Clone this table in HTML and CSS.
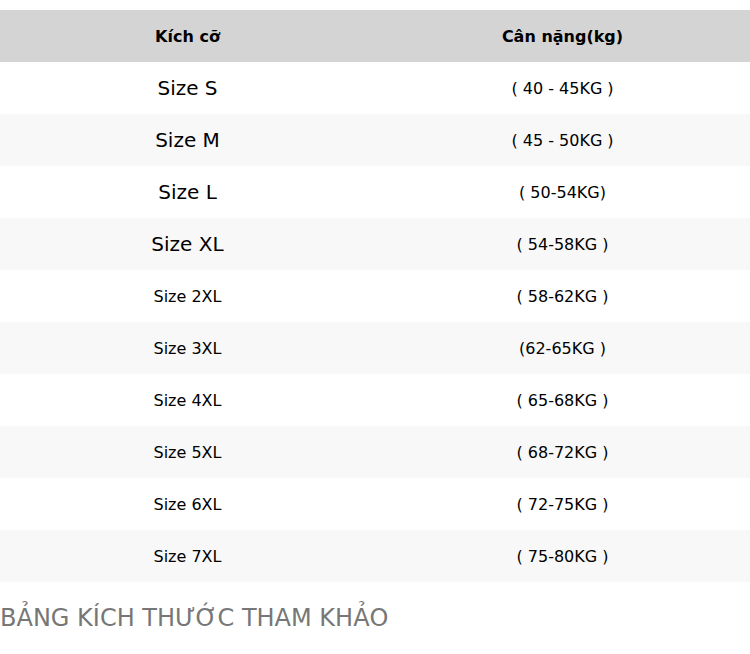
FILE: index.html
```html
<!DOCTYPE html>
<html lang="vi">
<head>
<meta charset="utf-8">
<title>Bảng kích thước</title>
<link rel="stylesheet" href="styles.css">
</head>
<body>
<table class="size-table">
  <caption class="caption">BẢNG KÍCH THƯỚC THAM KHẢO</caption>
  <thead>
    <tr><th>Kích cỡ</th><th>Cân nặng(kg)</th></tr>
  </thead>
  <tbody>
    <tr><td class="big">Size S</td><td>( 40 - 45KG )</td></tr>
    <tr><td class="big">Size M</td><td>( 45 - 50KG )</td></tr>
    <tr><td class="big">Size L</td><td>( 50-54KG)</td></tr>
    <tr><td class="big">Size XL</td><td>( 54-58KG )</td></tr>
    <tr><td>Size 2XL</td><td>( 58-62KG )</td></tr>
    <tr><td>Size 3XL</td><td>(62-65KG )</td></tr>
    <tr><td>Size 4XL</td><td>( 65-68KG )</td></tr>
    <tr><td>Size 5XL</td><td>( 68-72KG )</td></tr>
    <tr><td>Size 6XL</td><td>( 72-75KG )</td></tr>
    <tr><td>Size 7XL</td><td>( 75-80KG )</td></tr>
  </tbody>
</table>
</body>
</html>
```

FILE: styles.css
```css
html, body {
  margin: 0;
  padding: 0;
  background: #ffffff;
}
body {
  font-family: "DejaVu Sans", sans-serif;
  color: #000;
  padding-top: 10px;
}
.size-table {
  width: 750px;
  border-collapse: collapse;
  border-spacing: 0;
  table-layout: fixed;
}
.size-table th,
.size-table td {
  width: 50%;
  height: 52px;
  padding: 0;
  text-align: center;
  vertical-align: middle;
  font-size: 16px;
}
.size-table th {
  background: #d4d4d4;
  font-weight: bold;
}
.size-table tbody tr:nth-child(even) {
  background: #f8f8f8;
}
.size-table td.big {
  font-size: 20px;
}
.caption {
  caption-side: bottom;
  text-align: left;
  font-size: 24px;
  color: #777777;
  padding-top: 22px;
}
```
